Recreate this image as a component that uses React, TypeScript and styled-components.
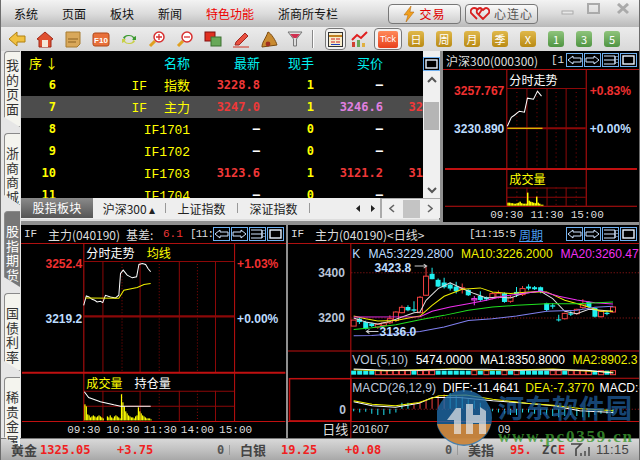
import React from "react";
import styled, { createGlobalStyle } from "styled-components";

const CJK = `"Noto Sans CJK SC", "Liberation Sans", sans-serif`;
const MONO = `"DejaVu Sans Mono", "Liberation Mono", monospace`;

const Global = createGlobalStyle`
  html, body { margin: 0; padding: 0; background: #000; overflow: hidden; }
  #root { width: 640px; height: 460px; }
`;

const Window = styled.div`
  position: relative; width: 640px; height: 460px; overflow: hidden;
  display: flex; flex-direction: column; background: #8f8f8f;
  font-family: ${CJK}; box-sizing: border-box; border-left: 1px solid #6c6c6c; border-right: 1px solid #6c6c6c;
`;
const MenuBar = styled.div`
  height: 27px; flex: none; display: flex; align-items: center; padding-left: 13px; box-sizing: border-box;
  background: linear-gradient(#f3f3f3 0, #dcdcdc 50%, #b9b9b9 100%);
`;
const MenuItem = styled.div<{ $red?: boolean; $w: number }>`
  width: ${p => p.$w}px; flex: none; font-size: 12px; line-height: 27px; white-space: nowrap;
  color: ${p => (p.$red ? "#ee0000" : "#111")};
`;
const TradeButton = styled.div<{ $w: number }>`
  width: ${p => p.$w}px; height: 20px; box-sizing: border-box; flex: none; margin-right: 4px;
  border: 1px solid #777; border-radius: 4px; background: linear-gradient(#fafafa, #cfcfcf);
  display: flex; align-items: center; justify-content: center; gap: 4px; font-size: 12px;
`;
const TradeLabel = styled.span<{ $red?: boolean }>`
  color: ${p => (p.$red ? "#e00000" : "#555")}; letter-spacing: 1px; white-space: nowrap;
`;
const WindowControls = styled.div`
  display: flex; margin-left: 18px; gap: 10px; align-items: flex-start; height: 27px; padding-top: 3px; box-sizing: border-box;
`;
const ToolBar = styled.div`
  height: 24px; flex: none; display: flex; align-items: center; background: linear-gradient(#ececec, #d8d8d8);
  padding-left: 2px; box-sizing: border-box;
`;
const ToolSlot = styled.div<{ $w?: number; $boxed?: boolean }>`
  width: ${p => p.$w ?? 28}px; height: 22px; flex: none; display: flex; align-items: center; justify-content: center;
  box-sizing: border-box; ${p => (p.$boxed ? "border: 1px solid #777; border-radius: 4px; background:#f2f2f2;" : "")}
`;
const Sep = styled.div`
  width: 1px; height: 18px; background: #888; border-right: 1px solid #fff; flex: none; margin: 0 11px 0 5px;
`;
const PeriodChip = styled.div<{ $tone: "gold" | "green" }>`
  width: 16px; height: 16px; border-radius: 3px; display: flex; align-items: center; justify-content: center;
  font-size: 11px; color: #fff; line-height: 1;
  background: ${p => (p.$tone === "gold" ? "linear-gradient(#e0b84a,#b98a14)" : "linear-gradient(#8fc47c,#4f9442)")};
`;
const TickChip = styled.div`
  width: 20px; height: 17px; border-radius: 2px; background: linear-gradient(#ff8a5a,#e8401c); color: #fff;
  font: 9px "Liberation Sans", sans-serif; display: flex; align-items: center; justify-content: center;
`;
const Main = styled.div`
  flex: 1; min-height: 0; display: flex;
`;
const TabRail = styled.div`
  width: 20px; flex: none; display: flex; flex-direction: column; background: #e6e6e6; padding-left: 3px; box-sizing: border-box;
`;
const SideTab = styled.div<{ $h: number; $active?: boolean; $pad: number }>`
  width: 16px; height: ${p => p.$h}px; flex: none; box-sizing: border-box; margin-bottom: 6px;
  border: 1px solid #8a8a8a; border-right: none; border-radius: 4px 0 0 0;
  clip-path: polygon(0 0, 100% 0, 100% 100%, 0 calc(100% - 10px));
  background: ${p => (p.$active ? "#777" : "#f4f4ee")}; color: ${p => (p.$active ? "#fff" : "#333")};
  font-size: 13px; line-height: 14.5px; text-align: center; padding-top: ${p => p.$pad}px; overflow: hidden; white-space: pre-line;
`;
const Content = styled.div`
  flex: 1; min-width: 0; display: flex; flex-direction: column; gap: 3px; background: #8f8f8f;
`;
const TopRow = styled.div`
  height: 171px; flex: none; display: flex; gap: 3px;
`;
const BottomRow = styled.div`
  flex: 1; min-height: 0; display: flex; gap: 2px;
`;
const ListPane = styled.div`
  width: 419px; flex: none; display: grid; grid-template-columns: 402px 17px; grid-template-rows: 147px 20px; background: #eee; border-right: 1px solid #777;
  border-bottom: 2px solid #ddd; box-sizing: border-box; height: 170px;
`;
const Table = styled.div`
  background: #000; overflow: hidden; padding-top: 1px;
`;
const Row = styled.div<{ $sel?: boolean }>`
  display: grid; grid-template-columns: 35px 134px 70px 54px 69px 40px; height: 22px; align-items: center;
  background: ${p => (p.$sel ? "#4c4c4c" : "transparent")};
`;
const Head = styled.div<{ $left?: boolean }>`
  font-size: 13px; color: ${p => (p.$left ? "#ffff00" : "#00f0f0")}; text-align: ${p => (p.$left ? "left" : "right")};
  line-height: 22px; white-space: nowrap; ${p => (p.$left ? "padding-left: 8px;" : "")}
`;
const Cell = styled.div<{ $c: string; $b?: boolean }>`
  font: ${p => (p.$b ? "bold " : "")}12px ${MONO}; color: ${p => p.$c}; text-align: right; white-space: nowrap; line-height: 22px;
`;
const NameCell = styled.div`
  font: 13px ${CJK}; color: #ffff00; text-align: right; white-space: nowrap; line-height: 22px;
`;
const CodeLabel = styled.span`
  font: 13px "Liberation Mono", monospace; margin-right: 17px;
`;
const CodeOnly = styled.span`
  font: 13px "Liberation Mono", monospace; letter-spacing: -0.1px;
`;
const VScroll = styled.div`
  background: #f0f0f0; display: flex; flex-direction: column; align-items: center;
`;
const MaxBtnSlot = styled.div`
  height: 15px; flex: none; margin-bottom: 4px; padding-top: 1px;
`;
const ScrollGlyph = styled.div`
  height: 16px; flex: none; display: flex; align-items: center; justify-content: center;
`;
const ScrollSpacer = styled.div`
  flex: 1;
`;
const ScrollThumb = styled.div`
  width: 15px; height: 28px; background: #b5b5b5; flex: none; margin-top: 15px;
`;
const TabStrip = styled.div`
  grid-column: 1 / 3; display: flex; align-items: center; background: #eee; overflow: hidden;
`;
const ActiveTab = styled.div`
  width: 72px; height: 20px; flex: none; background: linear-gradient(#8a8a8a, #555); color: #fff;
  font-size: 12px; line-height: 20px; text-align: center; letter-spacing: 0.2px;
`;
const StripTab = styled.div<{ $w: number }>`
  width: ${p => p.$w}px; flex: none; font-size: 12px; text-align: center; color: #222; white-space: nowrap;
`;
const StripDiv = styled.div`
  width: 1px; height: 10px; background: #999; flex: none;
`;
const StripArrows = styled.div`
  flex: 1; display: flex; justify-content: flex-end; padding-right: 3px;
`;
const HScroll = styled.div`
  width: 60px; height: 20px; flex: none; border-left: 2px solid #aaa; border-top: 1px solid #aaa;
  box-sizing: border-box; background: #f0f0f0; display: flex; align-items: center; justify-content: space-between; padding: 0 7px;
`;
const HThumb = styled.div`
  width: 17px; height: 18px; background: #c4c4c4;
`;
const Panel = styled.div<{ $w?: number }>`
  ${p => (p.$w ? `width:${p.$w}px; flex:none;` : "flex:1; min-width:0;")} background: #000; display: flex; flex-direction: column; overflow: hidden;
`;
const PanelHead = styled.div`
  height: 18px; flex: none; display: flex; align-items: center; color: #ddd; font-size: 12px; white-space: nowrap; overflow: hidden; padding-left: 3px;
  border-bottom: 1px solid #b01010; box-sizing: content-box;
`;
const HeadText = styled.span<{ $c?: string; $w?: number; $mono?: boolean; $tight?: boolean; $link?: boolean }>`
  color: ${p => p.$c ?? "#ddd"}; flex: none; ${p => (p.$w ? `width:${p.$w}px;` : "")} overflow: hidden; white-space: nowrap;
  ${p => (p.$mono ? `font: 11px "Liberation Mono", monospace;` : "")}
  ${p => (p.$tight ? "letter-spacing: -0.8px;" : "")}
  ${p => (p.$link ? "text-decoration: underline;" : "")}
`;
const HeadButtons = styled.div`
  margin-left: auto; display: flex; flex: none; gap: 1px; padding-right: 2px;
`;
const Chart = styled.svg`
  display: block; flex: 1; min-height: 0; width: 100%;
`;
const StatusBar = styled.div`
  height: 22px; flex: none; display: flex; align-items: center; padding-left: 10px; box-sizing: border-box;
  background: linear-gradient(#d8d8d8, #bdbdbd 60%, #a8a8a8); border-top: 1px solid #777;
`;
const StatusName = styled.div<{ $w: number }>`
  width: ${p => p.$w}px; flex: none; font-size: 13px; font-weight: 700; color: #444; white-space: nowrap;
`;
const StatusValue = styled.div<{ $w: number; $c?: string }>`
  width: ${p => p.$w}px; flex: none; font: bold 12px ${MONO}; color: ${p => p.$c ?? "#f02020"}; white-space: nowrap;
  letter-spacing: 0;
`;
const StatusDiv = styled.div`
  width: 1px; height: 10px; background: #999; flex: none; margin-right: 10px;
`;
const ClockText = styled.div`
  font: 13px "Liberation Sans", sans-serif; color: #444; margin-left: 2px; letter-spacing: 0.3px;
`;
const Watermark = styled.svg`
  position: absolute; left: 436px; top: 384px; width: 204px; height: 66px; pointer-events: none;
`;
const chartText = { fontFamily: CJK };
const boldText = { fontFamily: `"Liberation Sans", sans-serif`, fontWeight: 700 };

function poly(p: number[], ox: number, oy: number) {
  let s = "";
  for (let i = 0; i < p.length; i += 2) s += `${ox + p[i] / 3},${oy + p[i + 1] / 3} `;
  return s;
}

const HeadBtn = ({ kind }: { kind: "l" | "r" | "s" | "m" }) => (
  <svg width="17" height="14" viewBox="0 0 17 14">
    <rect x="0.5" y="0.5" width="16" height="13" fill="#000" stroke="#6fb0f0" />
    {kind === "l" && <path d="M2 7l5-4v2h8v4H7v2z" fill="none" stroke="#cfe4ff" />}
    {kind === "r" && <path d="M15 7l-5-4v2H2v4h8v2z" fill="none" stroke="#cfe4ff" />}
    {kind === "s" && <path d="M2 3h11v8H2M2 7h11M13 3v8M15 3v1M15 6v1M15 9v1" fill="none" stroke="#cfe4ff" />}
    {kind === "m" && <rect x="3" y="3" width="11" height="8" fill="none" stroke="#e8f2ff" strokeWidth="1.4" />}
  </svg>
);

const rows = [
  { n: "6", code: "IF", name: "指数", last: "3228.8", hand: "1", buy: "—", y: "" },
  { n: "7", code: "IF", name: "主力", last: "3247.0", hand: "1", buy: "3246.6", y: "32", sel: true },
  { n: "8", code: "IF1701", last: "—", hand: "0", buy: "—", y: "" },
  { n: "9", code: "IF1702", last: "—", hand: "0", buy: "—", y: "" },
  { n: "10", code: "IF1703", last: "3123.6", hand: "1", buy: "3121.2", y: "31" },
  { n: "11", code: "IF1704", last: "—", hand: "0", buy: "—", y: "" },
];

const icons: React.ReactNode[] = [
  <svg key="a" width="18" height="16" viewBox="0 0 18 16"><path d="M1 8l8-7v4h8v6H9v4z" fill="#f0c040" stroke="#b08010" /></svg>,
  <svg key="b" width="18" height="17" viewBox="0 0 18 17"><path d="M1 8l8-7 8 7-2 1v7H3V9z" fill="#e05030" stroke="#a02818" /><rect x="6" y="9" width="6" height="7" fill="#f4e8d8" /></svg>,
  <svg key="c" width="16" height="17" viewBox="0 0 16 17"><path d="M1 1h14v12l-3 3H1z" fill="#d9a85a" stroke="#a87c30" /><path d="M3 8h10M3 11h8" stroke="#8a6020" /></svg>,
  <svg key="d" width="18" height="16" viewBox="0 0 18 16"><rect x="1" y="2" width="16" height="13" rx="2" fill="#e8703a" stroke="#b04818" /><text x="9" y="12" fontSize="8" fill="#fff" textAnchor="middle" fontFamily="Liberation Sans" fontWeight="700">F10</text></svg>,
  <svg key="e" width="16" height="15" viewBox="0 0 16 15"><path d="M2 6a6 4 0 0 1 11-1l2-1v4h-4l1-1a4 3 0 0 0-8 0z" fill="#3c9a30" /><path d="M14 9a6 4 0 0 1-11 1l-2 1V7h4L4 8a4 3 0 0 0 8 0z" fill="#c8d048" /></svg>,
  <svg key="f" width="18" height="18" viewBox="0 0 18 18"><path d="M7 11l-5 5" stroke="#e0a020" strokeWidth="3" /><circle cx="11" cy="7" r="5" fill="#fff" stroke="#d83030" strokeWidth="1.5" /><path d="M8 7h6M11 4v6" stroke="#d83030" strokeWidth="1.3" /></svg>,
  <svg key="g" width="18" height="18" viewBox="0 0 18 18"><path d="M7 11l-5 5" stroke="#e0a020" strokeWidth="3" /><circle cx="11" cy="7" r="5" fill="#fff" stroke="#d83030" strokeWidth="1.5" /><path d="M8 7h6" stroke="#d83030" strokeWidth="1.3" /></svg>,
  <svg key="h" width="18" height="16" viewBox="0 0 18 16"><rect x="1" y="1" width="10" height="9" fill="#e03020" stroke="#801010" /><rect x="7" y="6" width="10" height="9" fill="#68a858" stroke="#3c7030" /></svg>,
  <svg key="i" width="18" height="17" viewBox="0 0 18 17"><path d="M4 11L13 2l3 3-9 9H3z" fill="#e85040" stroke="#a02820" /><path d="M1 16h16" stroke="#d03020" /></svg>,
  <svg key="j" width="18" height="17" viewBox="0 0 18 17"><path d="M8 1c3 1 8 9 9 13l-15 2C2 11 5 9 8 1z" fill="#c88a30" stroke="#7a4a10" /><circle cx="8" cy="13" r="2.4" fill="#a03020" /></svg>,
  <svg key="k" width="16" height="16" viewBox="0 0 16 16"><path d="M1 1h14L9.5 8v7h-3V8z" fill="#ddd" stroke="#777" /><path d="M3 3h10L9.5 7h-3z" fill="#d03050" /></svg>,
];

const grid = "#8c0808";
const bright = "#c01010";

function TopChart() {
  const bars = [3,3,2.5,2.5,2,2,2.5,3,4,2.5,2,2,2,13,5,4,3.5,3,2.5,9,3,2,1,1];
  const solid = [506, 526, 546, 565, 585];
  const dotted = [516, 536, 555, 575];
  return (
    <Chart viewBox="443 69 195 152" preserveAspectRatio="xMinYMin slice">
      <line x1="506.5" y1="69" x2="506.5" y2="204" stroke={bright} />
      <line x1="585.5" y1="69" x2="585.5" y2="204" stroke={bright} />
      {solid.slice(1, 4).map(x => <line key={x} x1={x + .5} x2={x + .5} y1="87" y2="167" stroke={grid} />)}
      {solid.slice(1, 4).map(x => <line key={x} x1={x + .5} x2={x + .5} y1="186" y2="204" stroke={grid} />)}
      {dotted.map(x => <line key={x} x1={x + .5} x2={x + .5} y1="87" y2="167" stroke={grid} strokeDasharray="1 3" />)}
      {dotted.map(x => <line key={x} x1={x + .5} x2={x + .5} y1="186" y2="204" stroke={grid} strokeDasharray="1 3" />)}
      <line x1="506" x2="585" y1="87.5" y2="87.5" stroke={grid} />
      <line x1="506" x2="585" y1="127" y2="127" stroke={grid} strokeWidth="2" />
      <line x1="445" x2="636" y1="167.5" y2="167.5" stroke={bright} strokeWidth="2" />
      <line x1="506" x2="585" y1="186.5" y2="186.5" stroke={grid} />
      <line x1="506" x2="585" y1="195.5" y2="195.5" stroke={grid} />
      <line x1="445" x2="636" y1="204.5" y2="204.5" stroke={bright} />
      <line x1="507" x2="542" y1="127" y2="127" stroke="#f0f000" />
      <polyline points="507,125 511,116 514,114 519,110 524,111 527,97 533,98 537,90 541,95" fill="none" stroke="#fff" />
      {bars.map((h, i) => <rect key={i} x={507 + i * 1.5} y={204 - h} width="1.5" height={h} fill="#ffff00" />)}
      <text x="509" y="84" fontSize="12" fill="#fff" style={chartText}>分时走势</text>
      <text x="509" y="182" fontSize="12" fill="#ffff00" style={chartText}>成交量</text>
      <text x="504" y="94" fontSize="12" fill="#f03030" textAnchor="end" style={boldText}>3257.767</text>
      <text x="504" y="132" fontSize="12" fill="#bcdcff" textAnchor="end" style={boldText}>3230.890</text>
      <text x="589" y="94" fontSize="12" fill="#f03030" style={boldText}>+0.83%</text>
      <text x="589" y="132" fontSize="12" fill="#bcdcff" style={boldText}>+0.00%</text>
      <text x="490" y="216" fontSize="11" fill="#ddd" fontFamily="Liberation Mono">09:30</text>
      <text x="530" y="216" fontSize="11" fill="#ddd" fontFamily="Liberation Mono">11:30</text>
      <text x="570" y="216" fontSize="11" fill="#ddd" fontFamily="Liberation Mono">15:00</text>
    </Chart>
  );
}

function LeftChart() {
  const solid = [102, 139, 178, 214];
  const dotted = [121, 158, 196];
  const vol = [16,14,6,5,3,4,5,4,3,4,5,4,3,2,0,0,4,3,5,3,2,4,5,4,3,2,26,18,14,9,7,5,4,3,3,2,4,5,13,9,7,5,4,3,2,2,2,1];
  return (
    <Chart viewBox="21 244 265 193" preserveAspectRatio="xMinYMin slice">
      <line x1="83.5" x2="83.5" y1="244" y2="420" stroke={bright} />
      <line x1="233.5" x2="233.5" y1="244" y2="420" stroke={bright} />
      {solid.map(x => <g key={x}><line x1={x + .5} x2={x + .5} y1="261" y2="372" stroke={grid} /><line x1={x + .5} x2={x + .5} y1="390" y2="420" stroke={grid} /></g>)}
      {dotted.map(x => <g key={x}><line x1={x + .5} x2={x + .5} y1="261" y2="372" stroke={grid} strokeDasharray="1 2" /><line x1={x + .5} x2={x + .5} y1="390" y2="420" stroke={grid} strokeDasharray="1 2" /></g>)}
      <line x1="83" x2="233" y1="261.5" y2="261.5" stroke={grid} />
      <line x1="83" x2="233" y1="316" y2="316" stroke={grid} strokeWidth="2" />
      <line x1="22" x2="284" y1="372" y2="372" stroke={bright} strokeWidth="2" />
      <line x1="83" x2="233" y1="390.5" y2="390.5" stroke={grid} />
      <line x1="83" x2="233" y1="405.5" y2="405.5" stroke={grid} />
      <line x1="22" x2="284" y1="420.5" y2="420.5" stroke={bright} />
      <polyline points={poly([250,240,258,212,266,215,275,222,283,225,290,230,300,228,307,232,315,210,330,215,345,218,355,210,360,145,368,135,380,150,395,158,408,155,415,118,425,115,435,118,442,130,450,140], 0, 225)} fill="none" stroke="#fff" />
      <polyline points={poly([255,218,355,219,370,195,410,187,430,178,450,175], 0, 225)} fill="none" stroke="#f0f000" />
      {vol.map((h, i) => <rect key={i} x={84 + i * 1.4} y={419.5 - h} width="1.2" height={h} fill="#ffff00" />)}
      <polyline points={poly([252,138,265,155,300,168,340,177,360,181,450,181], 0, 345)} fill="none" stroke="#fff" />
      <text x="86" y="258" fontSize="12" fill="#fff" style={chartText}>分时走势</text>
      <text x="146" y="258" fontSize="12" fill="#ffff00" style={chartText}>均线</text>
      <text x="86" y="387" fontSize="12" fill="#ffff00" style={chartText}>成交量</text>
      <text x="134" y="387" fontSize="12" fill="#fff" style={chartText}>持仓量</text>
      <text x="82" y="268" fontSize="12" fill="#f03030" textAnchor="end" style={boldText}>3252.4</text>
      <text x="82" y="323" fontSize="12" fill="#bcdcff" textAnchor="end" style={boldText}>3219.2</text>
      <text x="236" y="268" fontSize="12" fill="#f03030" style={boldText}>+1.03%</text>
      <text x="236" y="323" fontSize="12" fill="#bcdcff" style={boldText}>+0.00%</text>
      {[["09:30", 67], ["10:30", 106], ["11:30", 143], ["14:00", 180], ["15:00", 218]].map(([t, x]) => (
        <text key={t} x={x} y="432" fontSize="11" fill="#ddd" fontFamily="Liberation Mono">{t}</text>
      ))}
    </Chart>
  );
}

const candles: [number, number, number, number, number, string][] = [
  [205,284,302,284,302,"r"],[222,280,290,276,296,"c"],[241,290,310,286,312,"c"],[259,294,302,292,305,"c"],
  [277,297,305,295,310,"r"],[295,293,300,290,302,"r"],[313,280,292,270,296,"r"],[331,260,285,258,290,"r"],
  [349,246,262,240,264,"r"],[367,245,255,240,258,"c"],[385,252,256,228,260,"c"],[403,216,262,212,264,"r"],
  [421,153,210,124,212,"r"],[439,146,162,128,162,"c"],[457,164,184,160,186,"c"],[475,172,186,158,190,"c"],
  [493,178,190,172,196,"c"],[511,184,198,170,205,"c"],[529,188,192,175,205,"r"],[547,194,210,192,212,"c"],
  [565,220,224,212,240,"m"],[583,212,224,198,228,"c"],[601,216,222,214,226,"c"],[619,205,218,200,222,"r"],
  [637,204,216,196,220,"r"],[655,204,230,202,232,"c"],[673,216,228,210,232,"r"],[691,200,208,185,215,"c"],
  [709,190,208,182,212,"r"],[727,184,190,177,195,"c"],[745,186,192,182,194,"c"],[763,186,200,184,204,"c"],
  [781,234,254,232,258,"c"],[799,240,244,234,250,"c"],[817,282,285,268,288,"c"],[835,264,280,262,282,"r"],
  [853,264,268,258,272,"c"],[871,252,265,250,268,"r"],[889,236,246,222,250,"r"],[907,230,245,228,247,"c"],
  [925,248,274,246,276,"c"],[943,258,274,254,276,"r"],[961,262,266,256,270,"c"],[979,245,260,243,262,"r"],
];

function KChart() {
  const x = (v: number) => 285 + v / 3;
  const y = (v: number) => 225 + v / 3;
  const volBars = Array.from({ length: 44 }, (_, i) => i);
  const ticks = [2,3,2.5,4,5,5,4,3,0,0,0,0,-2,-4,-6,-7,-8,-6,-5,-3,-2,0,0,2,3,4,5,5,3,3,4,5,5,6,7,6,5,6,7,7,5,4,4,4];
  return (
    <Chart viewBox="288 244 350 193" preserveAspectRatio="xMinYMin slice">
      <line x1="350.5" x2="350.5" y1="244" y2="437" stroke={bright} />
      <line x1="288" x2="638" y1="350.5" y2="350.5" stroke={bright} />
      <line x1="351" x2="638" y1="377.5" y2="377.5" stroke={bright} />
      <rect x="289.5" y="378" width="61" height="42" fill="none" stroke={bright} strokeWidth="1.5" />
      <line x1="288" x2="638" y1="420.5" y2="420.5" stroke={bright} />
      <line x1="351" x2="638" y1="272.5" y2="272.5" stroke="#a01818" strokeDasharray="1 2" />
      <line x1="351" x2="638" y1="317.5" y2="317.5" stroke="#a01818" strokeDasharray="1 2" />
      <line x1="351" x2="638" y1="408.5" y2="408.5" stroke="#a01818" strokeDasharray="1 2" />
      {candles.map((c, i) => {
        const col = c[5] === "r" ? "#f04040" : c[5] === "m" ? "#f040f0" : "#20f0f0";
        return (
          <g key={i}>
            <line x1={x(c[0])} x2={x(c[0])} y1={y(c[3])} y2={y(c[4])} stroke={col} />
            <rect x={x(c[0]) - 2.5} y={y(c[1])} width="5" height={Math.max(1, (c[2] - c[1]) / 3)} fill={c[5] === "c" ? col : "#000"} stroke={c[5] === "c" ? "none" : col} />
          </g>
        );
      })}
      <polyline points={poly([205,278,241,290,277,296,313,288,349,275,385,262,403,260,421,225,457,190,493,173,529,190,565,205,601,218,637,215,673,218,709,205,763,198,799,220,835,258,871,265,907,252,943,255,979,258],285,225)} fill="none" stroke="#ddd" />
      <polyline points={poly([205,272,241,280,277,287,331,285,385,275,403,272,439,240,475,213,529,192,583,188,619,200,673,205,727,200,781,200,835,225,889,240,943,258,979,258],285,225)} fill="none" stroke="#f0f000" />
      <polyline points={poly([205,275,403,274,439,258,493,245,547,235,601,225,655,212,709,205,763,197,817,213,871,224,925,232,979,236],285,225)} fill="none" stroke="#f030f0" />
      <polyline points={poly([205,312,259,307,331,298,403,283,475,270,547,255,619,245,691,240,781,235,871,235,979,230],285,225)} fill="none" stroke="#20e020" />
      <polyline points={poly([205,331,259,330,331,325,403,318,475,305,547,285,619,280,691,272,781,258,871,255,925,246,979,243],285,225)} fill="none" stroke="#8080f0" />
      {volBars.map(i => {
        const red = [4,5,6,7,8,9,11,12,13,20,22,25,27,33,34,36,37,38,39,41,43].includes(i);
        return <rect key={i} x={x(205 + i * 18) - 2.5} y="370" width="5" height="4" fill={red ? "#000" : "#20f0f0"} stroke={red ? "#f04040" : "none"} />;
      })}
      <polyline points={poly([205,72,300,75,400,72,500,70,600,73,700,72,800,70,900,76,980,80],285,345)} fill="none" stroke="#f0f000" />
      <polyline points={poly([205,70,300,74,400,74,500,71,600,71,700,74,800,72,900,74,980,82],285,345)} fill="none" stroke="#fff" />
      {ticks.map((t, i) => <line key={i} x1={x(205 + i * 18)} x2={x(205 + i * 18)} y1="408" y2={408 + t * 1.2 + (i > 7 && i < 22 ? -6 : 0)} stroke={i > 9 && i < 16 ? "#f04040" : "#20e0f0"} />)}
      <polyline points={poly([205,168,260,180,330,184,400,172,440,155,520,155,620,165,720,172,800,180,880,195,980,200],285,345)} fill="none" stroke="#fff" />
      <polyline points={poly([205,165,260,175,330,180,400,170,460,150,540,148,620,160,720,172,800,178,880,188,980,195],285,345)} fill="none" stroke="#f0f000" />
      <text x="352" y="258" fontSize="12" fill="#bcdcff" fontFamily="Liberation Sans">K</text>
      <text x="368" y="258" fontSize="12" fill="#bcdcff" fontFamily="Liberation Sans">MA5:3229.2800</text>
      <text x="460" y="258" fontSize="12" fill="#f0f000" fontFamily="Liberation Sans">MA10:3226.2000</text>
      <text x="559" y="258" fontSize="12" fill="#f030f0" fontFamily="Liberation Sans">MA20:3260.47</text>
      <text x="374" y="272" fontSize="12" fill="#bcdcff" fontFamily="Liberation Sans" fontWeight="700">3423.8</text>
      <path d="M414 266h12m-3-2l3 2-3 2" fill="none" stroke="#ccc" />
      <text x="379" y="336" fontSize="12" fill="#bcdcff" fontFamily="Liberation Sans" fontWeight="700">3136.0</text>
      <path d="M378 331h-12m3-2l-3 2 3 2" fill="none" stroke="#ccc" />
      <text x="318" y="277" fontSize="12" fill="#b8c4d8" fontFamily="Liberation Sans" fontWeight="700">3400</text>
      <text x="318" y="322" fontSize="12" fill="#b8c4d8" fontFamily="Liberation Sans" fontWeight="700">3200</text>
      <text x="352" y="363" fontSize="12" fill="#bcc8dc" fontFamily="Liberation Sans">VOL(5,10)</text>
      <text x="415" y="363" fontSize="12" fill="#fff" fontFamily="Liberation Sans">5474.0000</text>
      <text x="479" y="363" fontSize="12" fill="#fff" fontFamily="Liberation Sans">MA1:8350.8000</text>
      <text x="571" y="363" fontSize="12" fill="#f0f000" fontFamily="Liberation Sans">MA2:8902.3</text>
      <text x="352" y="391" fontSize="12" fill="#bcc8dc" fontFamily="Liberation Sans">MACD(26,12,9)</text>
      <text x="442" y="391" fontSize="12" fill="#fff" fontFamily="Liberation Sans">DIFF:-11.4641</text>
      <text x="524" y="391" fontSize="12" fill="#f0f000" fontFamily="Liberation Sans">DEA:-7.3770</text>
      <text x="598" y="391" fontSize="12" fill="#fff" fontFamily="Liberation Sans">MACD:-</text>
      <text x="339" y="413" fontSize="12" fill="#b8c4d8" fontFamily="Liberation Sans" fontWeight="700">0</text>
      <text x="322" y="433" fontSize="13" fill="#ddd" style={chartText}>日线</text>
      <text x="352" y="432" fontSize="11" fill="#ddd" fontFamily="Liberation Sans">201607</text>
      <text x="497" y="432" fontSize="11" fill="#ddd" fontFamily="Liberation Sans">09</text>
    </Chart>
  );
}

export default function App() {
  return (
    <Window>
      <Global />
      <MenuBar>
        <MenuItem $w={48}>系统</MenuItem>
        <MenuItem $w={48}>页面</MenuItem>
        <MenuItem $w={48}>板块</MenuItem>
        <MenuItem $w={48}>新闻</MenuItem>
        <MenuItem $w={72} $red>特色功能</MenuItem>
        <MenuItem $w={110}>浙商所专栏</MenuItem>
        <TradeButton $w={73}>
          <svg width="12" height="16" viewBox="0 0 12 16"><path d="M8 0L1 9h4l-2 7 8-10H7z" fill="#f0a020" stroke="#b06000" strokeWidth=".5" /></svg>
          <TradeLabel $red>交易</TradeLabel>
        </TradeButton>
        <TradeButton $w={73}>
          <svg width="20" height="13" viewBox="0 0 20 13"><path d="M7 12L1 6c-1-3 1-5 3-5s3 1 3 2c1-1 2-2 3-2s2 1 1 3l-2 3M13 12L7 6c-1-3 1-5 3-5 1 0 2 1 3 2 1-1 2-2 3-2 2 0 4 2 3 5z" fill="none" stroke="#d82020" strokeWidth="1.8" /></svg>
          <TradeLabel>心连心</TradeLabel>
        </TradeButton>
        <WindowControls>
          <svg width="16" height="12" viewBox="0 0 16 12"><rect x="2" y="8" width="11" height="3" fill="#e8e8e8" stroke="#aaa" /></svg>
          <svg width="16" height="12" viewBox="0 0 16 12"><rect x="2" y="1" width="11" height="9" fill="none" stroke="#aaa" strokeWidth="2" /></svg>
          <svg width="16" height="12" viewBox="0 0 16 12" style={{ marginLeft: 3 }}><path d="M3 1l10 9M13 1L3 10" stroke="#aaa" strokeWidth="3" /></svg>
        </WindowControls>
      </MenuBar>
      <ToolBar>
        {icons.map((ic, i) => <ToolSlot key={i} $w={i === 10 ? 24 : 28}>{ic}</ToolSlot>)}
        <Sep />
        <ToolSlot $w={21} $boxed>
          <svg width="15" height="15" viewBox="0 0 15 15"><rect x=".5" y=".5" width="14" height="14" fill="#f6eccc" stroke="#333" /><path d="M1 4h13" stroke="#c08020" strokeWidth="2" /><path d="M3 7h4M8 7h4M3 10h4M8 10h4" stroke="#d02020" /><path d="M3 12.5h9" stroke="#2040c0" /></svg>
        </ToolSlot>
        <ToolSlot $w={28}>
          <svg width="18" height="17" viewBox="0 0 18 17"><rect x="1" y="11" width="3" height="5" fill="#d04030" /><rect x="6" y="9" width="3" height="7" fill="#68a858" /><rect x="11" y="12" width="3" height="4" fill="#e0b040" /><path d="M1 9l5-5 4 3 6-6" fill="none" stroke="#e02020" strokeWidth="2" /></svg>
        </ToolSlot>
        <ToolSlot $w={28} $boxed><TickChip>Tick</TickChip></ToolSlot>
        {["日", "周", "月", "季", "X"].map(t => <ToolSlot key={t}><PeriodChip $tone="gold">{t}</PeriodChip></ToolSlot>)}
        {["1", "3", "5"].map(t => <ToolSlot key={t}><PeriodChip $tone="green">{t}</PeriodChip></ToolSlot>)}
      </ToolBar>
      <Main>
        <TabRail>
          <SideTab $h={76} $pad={6}>{"我\n的\n页\n面"}</SideTab>
          <SideTab $h={72} $pad={12}>{"浙\n商\n商\n城"}</SideTab>
          <SideTab $h={76} $pad={12} $active>{"股\n指\n期\n货"}</SideTab>
          <SideTab $h={78} $pad={12}>{"国\n债\n利\n率"}</SideTab>
          <SideTab $h={70} $pad={12}>{"稀\n贵\n金\n属"}</SideTab>
        </TabRail>
        <Content>
          <TopRow>
            <ListPane>
              <Table>
                <Row>
                  <Head $left>序 ↓</Head>
                  <Head>名称</Head>
                  <Head>最新</Head>
                  <Head>现手</Head>
                  <Head>买价</Head>
                </Row>
                {rows.map(r => (
                  <Row key={r.n} $sel={r.sel}>
                    <Cell $c="#ffff00" $b>{r.n}</Cell>
                    <NameCell>
                      {r.name ? <><CodeLabel>{r.code}</CodeLabel>{r.name}</> : <CodeOnly>{r.code}</CodeOnly>}
                    </NameCell>
                    <Cell $c={r.last === "—" ? "#fff" : "#f03838"} $b>{r.last}</Cell>
                    <Cell $c="#ffff00" $b>{r.hand}</Cell>
                    <Cell $c={r.buy === "—" ? "#fff" : r.sel ? "#e080e0" : "#f03838"} $b>{r.buy}</Cell>
                    <Cell $c="#f03838" $b>{r.y}</Cell>
                  </Row>
                ))}
              </Table>
              <VScroll>
                <MaxBtnSlot><HeadBtn kind="m" /></MaxBtnSlot>
                <ScrollGlyph><svg width="10" height="7" viewBox="0 0 10 7"><path d="M1 6l4-4 4 4" fill="none" stroke="#555" strokeWidth="2" /></svg></ScrollGlyph>
                <ScrollThumb />
                <ScrollSpacer />
                <ScrollGlyph><svg width="10" height="7" viewBox="0 0 10 7"><path d="M1 1l4 4 4-4" fill="none" stroke="#555" strokeWidth="2" /></svg></ScrollGlyph>
              </VScroll>
              <TabStrip>
                <ActiveTab>股指板块</ActiveTab>
                <StripTab $w={72}>沪深300 ▴</StripTab>
                <StripDiv />
                <StripTab $w={71}>上证指数</StripTab>
                <StripDiv />
                <StripTab $w={71}>深证指数</StripTab>
                <StripDiv />
                <StripArrows><svg width="22" height="9" viewBox="0 0 22 9"><path d="M5 1L1 4.5 5 8zM16 1l4 3.5L16 8z" fill="#222" /></svg></StripArrows>
                <HScroll>
                  <svg width="6" height="9" viewBox="0 0 6 9"><path d="M5 1L1 4.5 5 8" fill="none" stroke="#666" strokeWidth="1.6" /></svg>
                  <HThumb />
                  <svg width="6" height="9" viewBox="0 0 6 9"><path d="M1 1l4 3.5L1 8" fill="none" stroke="#666" strokeWidth="1.6" /></svg>
                </HScroll>
              </TabStrip>
            </ListPane>
            <Panel>
              <PanelHead>
                <HeadText $w={105}>沪深300(000300)</HeadText>
                <HeadText $w={13} $mono>[1</HeadText>
                <HeadButtons>
                  <HeadBtn kind="l" /><HeadBtn kind="r" /><HeadBtn kind="s" /><HeadBtn kind="m" />
                </HeadButtons>
              </PanelHead>
              <TopChart />
            </Panel>
          </TopRow>
          <BottomRow>
            <Panel $w={265}>
              <PanelHead>
                <HeadText $w={24} $mono>IF</HeadText>
                <HeadText $w={78}>主力(040190)</HeadText>
                <HeadText $w={37}>基差:</HeadText>
                <HeadText $w={27} $c="#f03838" $mono>6.1</HeadText>
                <HeadText $w={23} $mono $tight>[11:</HeadText>
                <HeadButtons>
                  <HeadBtn kind="l" /><HeadBtn kind="r" /><HeadBtn kind="s" /><HeadBtn kind="m" />
                </HeadButtons>
              </PanelHead>
              <LeftChart />
            </Panel>
            <Panel>
              <PanelHead>
                <HeadText $w={24} $mono>IF</HeadText>
                <HeadText $w={154}>主力(040190)&lt;日线&gt;</HeadText>
                <HeadText $w={50} $mono $tight>[11:15:5</HeadText>
                <HeadText $c="#4a9cf0" $link>周期</HeadText>
                <HeadButtons>
                  <HeadBtn kind="l" /><HeadBtn kind="r" /><HeadBtn kind="s" /><HeadBtn kind="m" />
                </HeadButtons>
              </PanelHead>
              <KChart />
            </Panel>
          </BottomRow>
        </Content>
      </Main>
      <StatusBar>
        <StatusName $w={29}>黄金</StatusName>
        <StatusValue $w={77}>1325.05</StatusValue>
        <StatusValue $w={100}>+3.75</StatusValue>
        <StatusValue $w={12} $c="#555">0</StatusValue>
        <StatusDiv />
        <StatusName $w={41}>白银</StatusName>
        <StatusValue $w={64}>19.25</StatusValue>
        <StatusValue $w={100}>+0.08</StatusValue>
        <StatusValue $w={12} $c="#555">0</StatusValue>
        <StatusDiv />
        <StatusName $w={42}>美指</StatusName>
        <StatusValue $w={32}>95.</StatusValue>
        <StatusValue $w={8} $c="#444">Z</StatusValue>
        <StatusValue $w={8} $c="#444">C</StatusValue>
        <StatusValue $w={12}>E</StatusValue>
        <svg width="24" height="14" viewBox="0 0 24 14"><path d="M1 1h10L6 6v7" fill="none" stroke="#444" strokeWidth="1.6" /><path d="M11 13v-3M15 13V8M19 13V4" stroke="#666" strokeWidth="2" /></svg>
        <ClockText>11:15</ClockText>
      </StatusBar>
      <Watermark viewBox="436 384 204 66">
        <circle cx="463" cy="418" r="28" fill="#1f6aa8" opacity="0.8" />
        <path d="M436 424a28 28 0 0 0 54 0z" fill="#e08a30" opacity="0.85" />
        <path d="M446 420l9-12h5v26h-7v-14zM465 404h7v11h7v-8l6 4v23h-7v-11h-6v11h-7z" fill="#e8e8e8" opacity="0.7" />
        <text x="497" y="418" fontSize="26" fontWeight="700" fill="#1f5f9f" opacity="0.72" style={chartText} textLength="134">河东软件园</text>
        <text x="497" y="442" fontSize="17" fontWeight="700" fill="#3c9a30" opacity="0.8" fontFamily="Liberation Serif" textLength="134">www.pc0359.cn</text>
      </Watermark>
    </Window>
  );
}
